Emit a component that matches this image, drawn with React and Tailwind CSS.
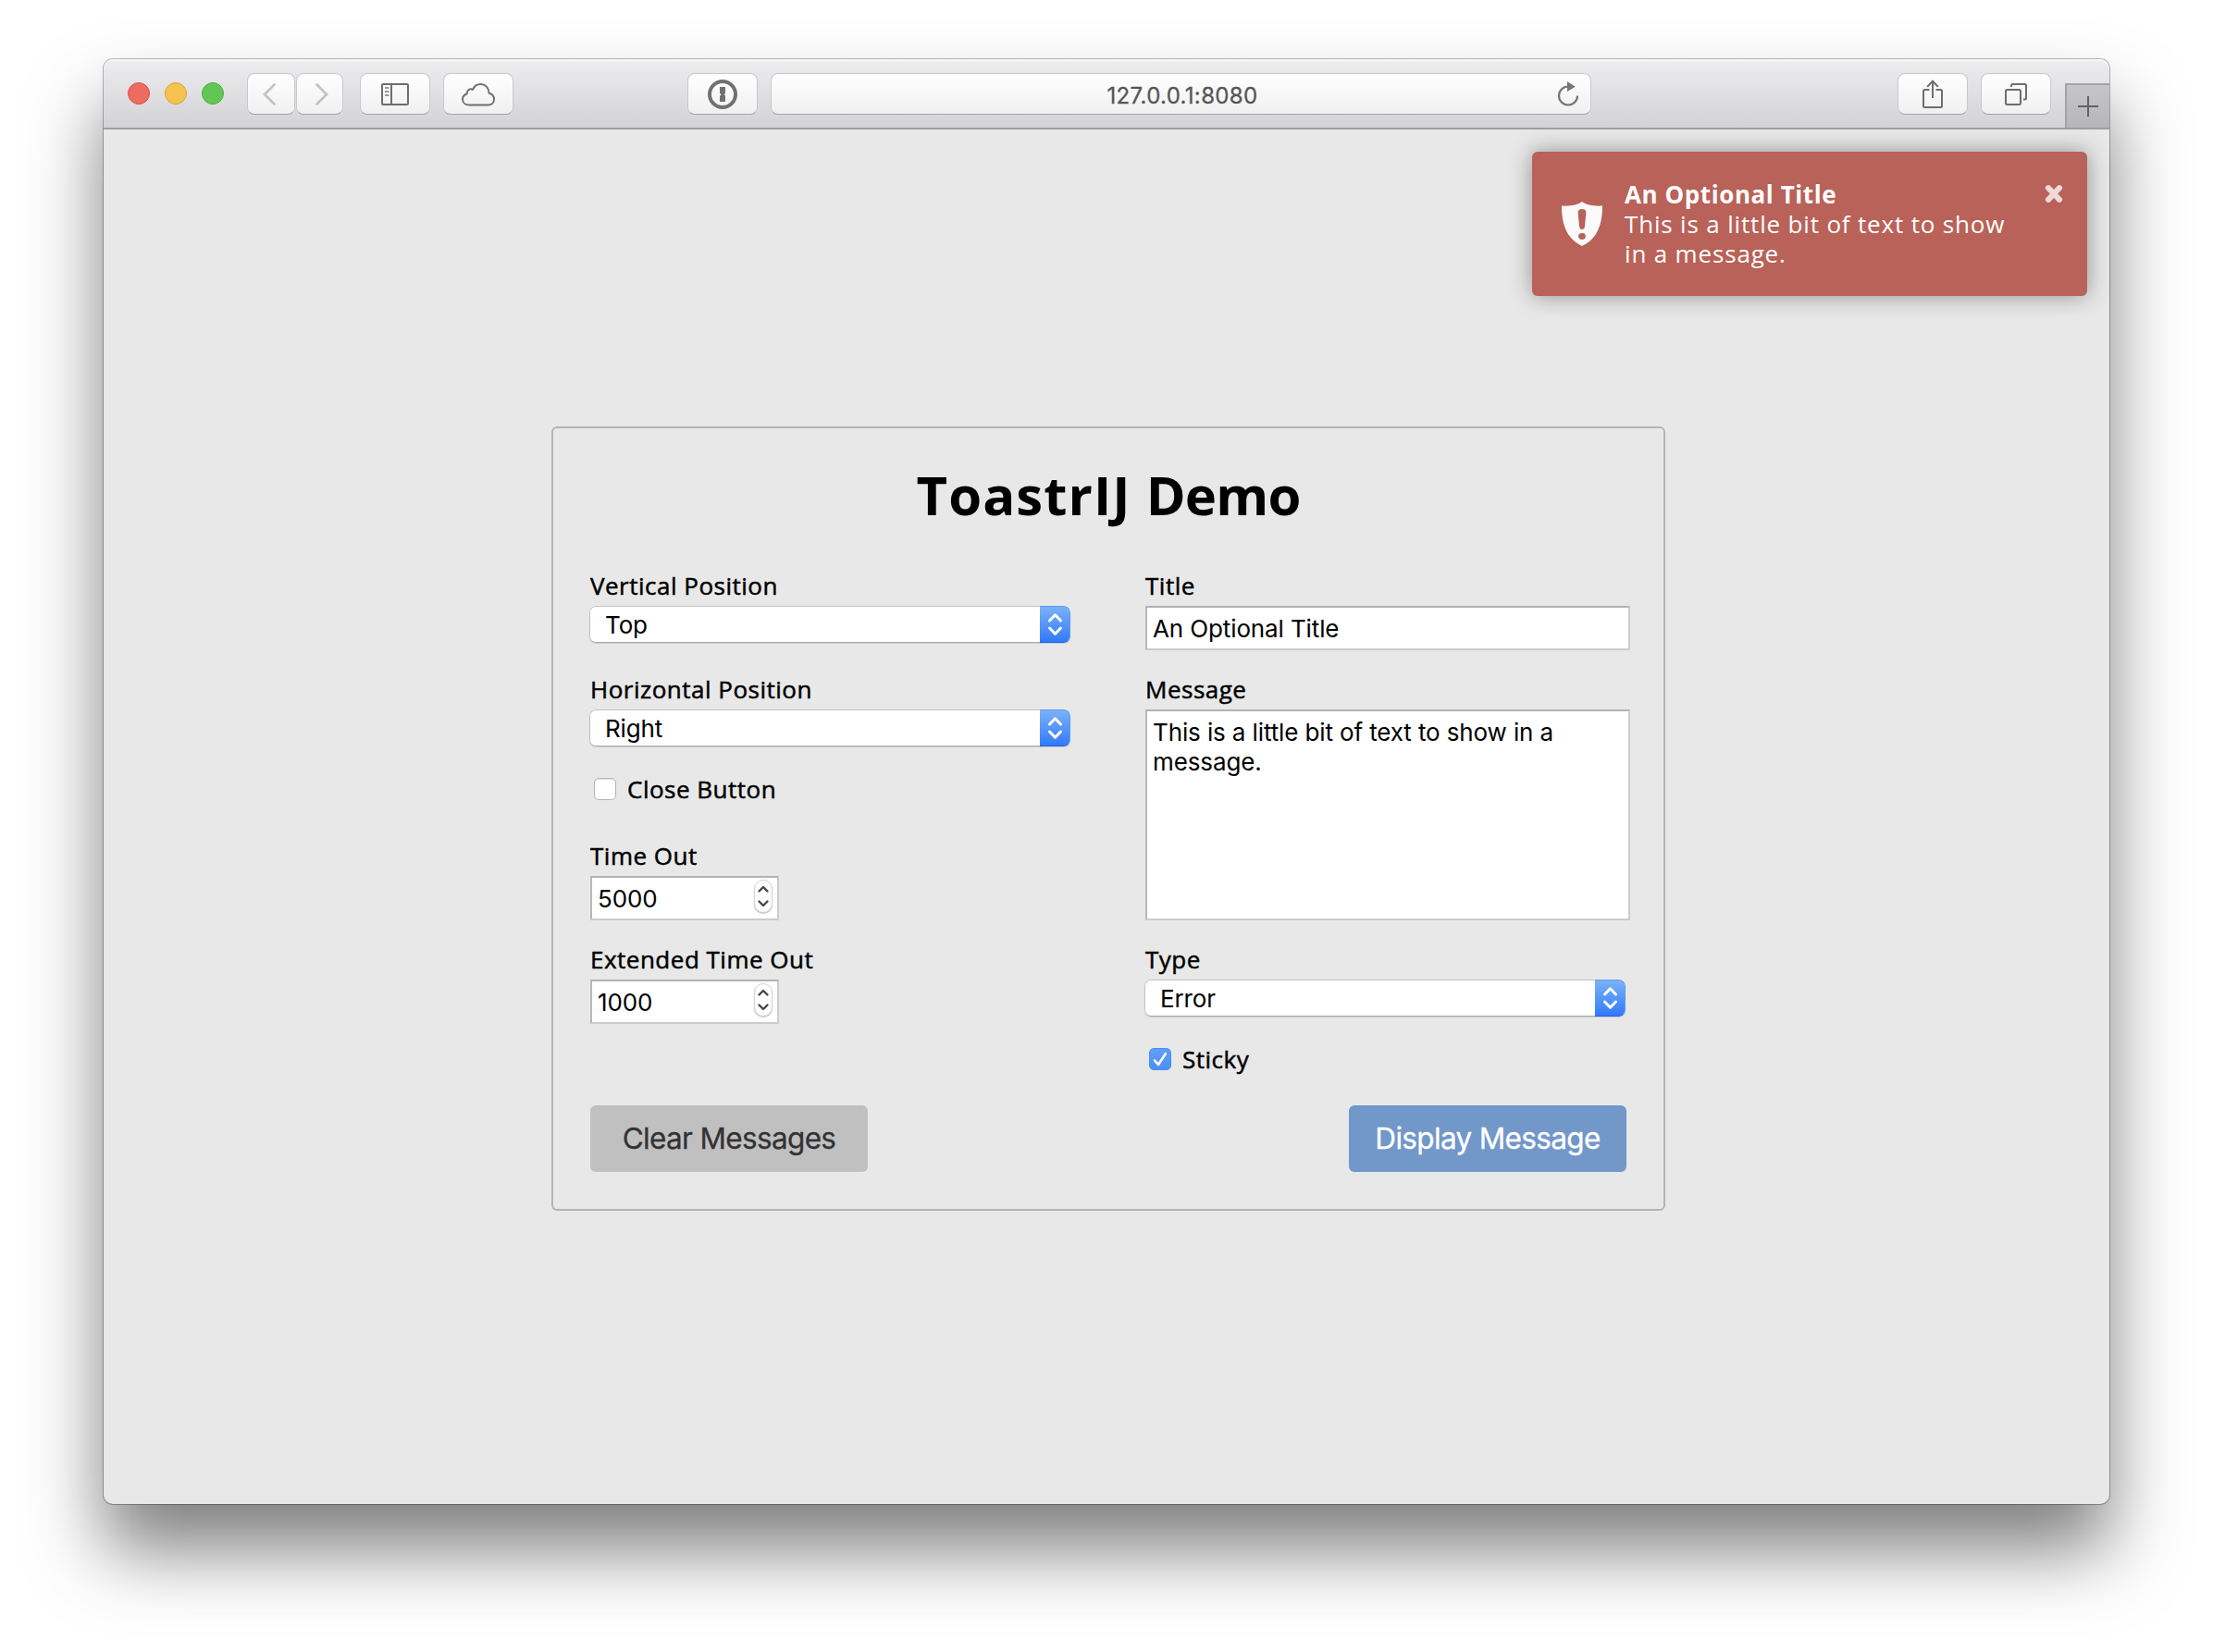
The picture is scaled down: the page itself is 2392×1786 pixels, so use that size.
import React from "react";

const LABEL = "block h-8 whitespace-nowrap text-[26px] leading-8 tracking-[0.5px] [-webkit-text-stroke:0.5px_black]";
const VALUE = "font-['Inter','Liberation_Sans',sans-serif] text-[26px] tracking-[-0.12px] text-black";
const INSET = "border-2 border-[#cccccc] border-t-[#b2b2b2] border-l-[#b8b8b8] bg-white outline-none";
const TOOL =
  "flex h-[45px] shrink-0 items-center justify-center rounded-[8px] border border-[#c9c9cb] border-b-[#a3a3a5] bg-linear-to-b from-white to-[#f0f0f0]";

function SelectField({ label, value, className }) {
  return (
    <label className={className}>
      <span className={LABEL}>{label}</span>
      <span className="mt-1.5 -ml-px flex h-10 w-[520px] overflow-hidden rounded-[7px] shadow-[0_1px_1px_rgba(0,0,0,0.12)]">
        <select
          className={`${VALUE} h-10 flex-1 appearance-none rounded-l-[7px] border border-r-0 border-[#c3c3c3] border-b-[#a9a9a9] bg-white pt-0.5 pl-4 leading-[36px] outline-none`}
        >
          <option>{value}</option>
        </select>
        <span className="flex w-[33px] items-center justify-center rounded-r-[7px] border border-l-0 border-[#5c9df2] border-b-[#2161ee] bg-linear-to-b from-[#7bb1f7] to-[#3179fa]">
          <svg width="18" height="28" viewBox="0 0 18 28" fill="none" stroke="white" strokeWidth="3" strokeLinecap="round" strokeLinejoin="round">
            <path d="M3.500 10 9.500 3.800 15.500 10M3.500 18 9.500 24.200 15.500 18" />
          </svg>
        </span>
      </span>
    </label>
  );
}

function NumberField({ label, value }) {
  return (
    <label className="h-28">
      <span className={LABEL}>{label}</span>
      <span className={`${INSET} mt-1.5 flex h-12 w-[204px] justify-between pl-1.5 pr-[5px]`}>
        <input
          className={`${VALUE} w-36 outline-none`}
          defaultValue={value}
        />
        <span className="mt-0.5 flex h-9 w-5 items-center justify-center rounded-full border border-[#d2d2d2] bg-white shadow-[0_1px_1px_rgba(0,0,0,0.25)]">
          <svg width="14" height="26" viewBox="0 0 14 26" fill="none" stroke="#454545" strokeWidth="2.4" strokeLinecap="round" strokeLinejoin="round">
            <path d="M2.5 7.500 7 3 11.5 7.500M2.5 18.500 7 23 11.5 18.500" />
          </svg>
        </span>
      </span>
    </label>
  );
}

function Toolbar() {
  return (
    <header className="flex h-[76px] rounded-t-[10px] border-b-2 border-[#a0a0a3] bg-linear-to-b from-[#ededef] to-[#d3d3d5] pl-[26px] shadow-[inset_0_2px_1px_rgba(255,255,255,0.6)]">
      <div className="mt-[25px] flex h-6 gap-4">
        <i className="size-6 rounded-full border border-[#dc5048] bg-[#ed6b60]" />
        <i className="size-6 rounded-full border border-[#dda13a] bg-[#f6c350]" />
        <i className="size-6 rounded-full border border-[#4bae3d] bg-[#62c655]" />
      </div>
      <div className="mt-[15px] ml-[25px] flex h-[45px] gap-px">
        <div className={`${TOOL} w-[52px]`}>
          <svg className="mr-1" width="16" height="26" viewBox="0 0 16 26" fill="none" stroke="#c3c3c3" strokeWidth="2.8" strokeLinecap="round">
            <path d="M13.500 2.500 3 13 13.500 23.500" />
          </svg>
        </div>
        <div className={`${TOOL} w-[51px]`}>
          <svg className="ml-1" width="16" height="26" viewBox="0 0 16 26" fill="none" stroke="#c3c3c3" strokeWidth="2.8" strokeLinecap="round">
            <path d="M2.500 2.500 13 13 2.500 23.500" />
          </svg>
        </div>
      </div>
      <div className={`${TOOL} mt-[15px] ml-[18px] w-[76px]`}>
        <svg width="30" height="24" viewBox="0 0 30 24" fill="none" stroke="#6e6e6e" strokeWidth="2">
          <rect x="1" y="1" width="28" height="22" rx="1" />
          <path d="M11 1V23" />
          <path d="M4 5H8.500M4 9H8.500M4 13H8.500" stroke="#9a9a9a" strokeWidth="1.800" />
        </svg>
      </div>
      <div className={`${TOOL} mt-[15px] ml-3.5 w-[76px]`}>
        <svg width="38" height="26" viewBox="0 0 38 26" fill="none" stroke="#707070" strokeWidth="2" strokeLinejoin="round">
          <path d="M9 24.500H29.500C33.500 24.500 36 21.800 36 18.200C36 15 34 12.600 30.600 11.700C30.500 5.800 26.500 2 21.500 2C17.600 2 14.500 4 13.200 7.800C9.800 6 6.600 8.500 6.800 12.200C3.800 13.400 2 15.700 2 18.300C2 22 5 24.500 9 24.500Z" />
        </svg>
      </div>
      <div className={`${TOOL} mt-[15px] ml-[188px] w-[76px]`}>
        <svg width="34" height="34" viewBox="0 0 34 34">
          <circle cx="17" cy="17" r="14" fill="none" stroke="#707070" strokeWidth="4" />
          <path d="M14 9H20V15.600L18.800 17.200L20 18.600V25H14V18.800L15.600 17.300L14 15.800Z" fill="#707070" />
        </svg>
      </div>
      <div className={`${TOOL} mt-[15px] ml-3.5 w-[887px] pl-[48px]`}>
        <span className="flex-1 pt-[4px] text-center font-['Inter','Liberation_Sans',sans-serif] text-[24px] tracking-[0.35px] text-[#555555] [-webkit-text-stroke:0.3px_#555555]">
          127.0.0.1:8080
        </span>
        <svg className="mr-[11px] ml-2" width="26" height="30" viewBox="0 0 26 30">
          <path d="M23 16.500A10 10 0 1 1 13 6.500" fill="none" stroke="#757575" strokeWidth="2.200" />
          <path d="M12 1 20.700 6.700 12 12Z" fill="#757575" />
        </svg>
      </div>
      <div className={`${TOOL} mt-[15px] ml-[331px] w-[76px]`}>
        <svg width="26" height="32" viewBox="0 0 26 32" fill="none" stroke="#6e6e6e" strokeWidth="2">
          <path d="M9.500 11H4.500Q3 11 3 12.500V28.500Q3 30 4.500 30H21.500Q23 30 23 28.500V12.500Q23 11 21.500 11H16.500" />
          <path d="M13 20V2M7.200 7.800 13 1.600 18.800 7.800" />
        </svg>
      </div>
      <div className={`${TOOL} mt-[15px] ml-3.5 w-[76px]`}>
        <svg width="26" height="26" viewBox="0 0 26 26" fill="none" stroke="#6e6e6e" strokeWidth="2">
          <rect x="2" y="8" width="16" height="16" rx="1.500" />
          <path d="M8 5V3.500Q8 2 9.500 2H22.500Q24 2 24 3.500V17Q24 18.500 22.500 18.500H21" />
        </svg>
      </div>
      <div className="mt-[26px] ml-auto flex w-12 items-center justify-center border-t-2 border-l-2 border-[#a3a3a5] bg-linear-to-b from-[#c6c6c8] to-[#b6b6b8]">
        <svg width="22" height="22" viewBox="0 0 22 22" stroke="#626262" strokeWidth="2">
          <path d="M11 0V22M0 11H22" />
        </svg>
      </div>
    </header>
  );
}

function Toast() {
  return (
    <aside className="absolute top-6 right-6 flex h-[156px] w-[600px] rounded-[6px] bg-[#b96259] pt-[30px] pl-8 text-[26px] leading-8 text-white shadow-[0_0_24px_rgba(0,0,0,0.38)]">
      <svg className="mt-6 shrink-0" width="44" height="48" viewBox="0 0 44 48">
        <path d="M22 0C18 3.500 8 5.200 0 4.500C0 24 5 40 22 48C39 40 44 24 44 4.500C36 5.200 26 3.500 22 0Z" fill="#fafafa" />
        <path d="M22 8Q26.600 8 26.400 12L25 26.500Q24.600 30 22 30Q19.400 30 19 26.500L17.600 12Q17.400 8 22 8Z" fill="#b96259" />
        <ellipse cx="22" cy="37.500" rx="3.900" ry="3.400" fill="#b96259" />
      </svg>
      <div className="ml-6">
        <p className="font-bold tracking-[0.58px]">An Optional Title</p>
        <p className="tracking-[0.83px]">
          This is a little bit of text to show
          <br />
          in a message.
        </p>
      </div>
      <svg className="mt-[5px] mr-[26px] ml-auto" width="20" height="21" viewBox="0 0 20 21" stroke="#efdad8" strokeWidth="6.200" strokeLinecap="round">
        <path d="M4 4.200 16 16.800M16 4.200 4 16.800" />
      </svg>
    </aside>
  );
}

function DemoPanel() {
  return (
    <main className="mt-[321px] ml-[484px] flex h-[848px] w-[1204px] flex-col rounded-[6px] border-2 border-[#b4b4b4] px-10 pt-8">
      <h1 className="h-20 text-center text-[58px] leading-[80px] font-bold tracking-[1.1px]">
        ToastrIJ <span className="tracking-[-0.8px]">Demo</span>
      </h1>
      <div className="mt-[42px] flex h-[578px] gap-20">
        <div className="flex w-[520px] flex-col">
          <SelectField label="Vertical Position" value="Top" className="h-28" />
          <SelectField label="Horizontal Position" value="Right" className="h-[108px]" />
          <label className="flex h-[72px] pl-1">
            <span className="mt-1 mr-3 size-6 rounded-[5px] border border-[#b5b5b5] bg-white shadow-[inset_0_1px_1px_rgba(0,0,0,0.12)]" />
            <span className={LABEL}>Close Button</span>
          </label>
          <NumberField label="Time Out" value="5000" />
          <NumberField label="Extended Time Out" value="1000" />
        </div>
        <div className="flex w-[520px] flex-col">
          <label className="h-28">
            <span className={LABEL}>Title</span>
            <input className={`${INSET} ${VALUE} mt-1.5 block h-12 w-[524px] px-1.5`} defaultValue="An Optional Title" />
          </label>
          <label className="h-[292px]">
            <span className={LABEL}>Message</span>
            <textarea
              className={`${INSET} ${VALUE} mt-1.5 block h-[228px] w-[524px] resize-none overflow-hidden px-1.5 pt-[7px] leading-8`}
              defaultValue="This is a little bit of text to show in a message."
            />
          </label>
          <SelectField label="Type" value="Error" className="h-[108px]" />
          <label className="flex pl-1">
            <span className="mt-1 mr-3 flex size-6 items-center justify-center rounded-[5px] border border-[#4a90ec] bg-linear-to-b from-[#5e9ff5] to-[#4c90f4]">
              <svg className="shrink-0" width="18" height="18" viewBox="0 0 18 18" fill="none" stroke="white" strokeWidth="2.600" strokeLinecap="round" strokeLinejoin="round">
                <path d="M3 10.500 7 15 14.800 3.200" />
              </svg>
            </span>
            <span className={LABEL}>Sticky</span>
          </label>
        </div>
      </div>
      <div className="flex justify-between font-['Inter','Liberation_Sans',sans-serif] text-[31.5px] tracking-[-0.65px]">
        <button className="h-[72px] w-[300px] rounded-[6px] bg-[#c0c0c0] text-[#333333] [-webkit-text-stroke:0.3px_#333333]">Clear Messages</button>
        <button className="h-[72px] w-[300px] rounded-[6px] bg-[#7297c9] text-white [-webkit-text-stroke:0.3px_white]">Display Message</button>
      </div>
    </main>
  );
}

export default function App() {
  return (
    <div className="h-[1786px] w-[2392px] overflow-hidden bg-white pt-16 pl-28 font-['Open_Sans','Noto_Sans',sans-serif] text-black">
      <div className="h-[1562px] w-[2168px] rounded-[10px] bg-[#e8e8e8] shadow-[0_0_0_1px_rgba(0,0,0,0.28),0_50px_80px_rgba(0,0,0,0.5)]">
        <Toolbar />
        <div className="relative flex">
          <DemoPanel />
          <Toast />
        </div>
      </div>
    </div>
  );
}
